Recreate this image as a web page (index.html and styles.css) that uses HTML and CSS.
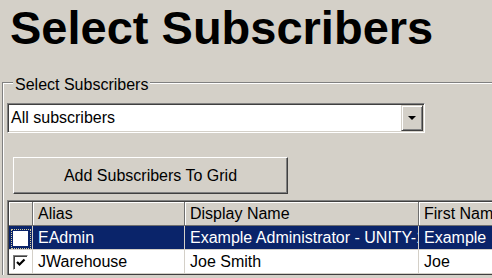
FILE: index.html
```html
<!DOCTYPE html>
<html lang="en">
<head>
    <meta charset="UTF-8">
    <title>Select Subscribers</title>
    <link rel="stylesheet" href="styles.css">
</head>
<body>
    <h1 class="title">Select Subscribers</h1>

    <fieldset class="group">
        <legend>Select Subscribers</legend>

        <div class="combo">
            <span class="combo-text">All subscribers</span>
            <span class="combo-btn"><i class="arrow"></i></span>
        </div>

        <button class="btn">Add Subscribers To Grid</button>

        <div class="grid-wrap">
            <table class="grid">
                <colgroup>
                    <col class="col-check">
                    <col class="col-alias">
                    <col class="col-display">
                    <col class="col-first">
                </colgroup>
                <thead>
                    <tr>
                        <th></th>
                        <th>Alias</th>
                        <th>Display Name</th>
                        <th>First Name</th>
                    </tr>
                </thead>
                <tbody>
                    <tr class="selected">
                        <td class="check-cell"><span class="focus"><span class="checkbox"></span></span></td>
                        <td>EAdmin</td>
                        <td>Example Administrator - UNITY-1</td>
                        <td>Example</td>
                    </tr>
                    <tr>
                        <td class="check-cell"><span class="checkbox sunken">
                            <svg width="11" height="11" viewBox="0 0 11 11"><path d="M2 5 L4.5 7.5 L9.5 2.5" fill="none" stroke="#000" stroke-width="2.2"/></svg>
                        </span></td>
                        <td>JWarehouse</td>
                        <td>Joe Smith</td>
                        <td>Joe</td>
                    </tr>
                </tbody>
            </table>
        </div>
    </fieldset>
</body>
</html>
```

FILE: styles.css
```css
:root {
    --face: #d4d0c8;
    --shadow: #808080;
    --dark: #404040;
    --select: #0a246a;
}

body {
    margin: 0;
    background: var(--face);
    font-family: 'Liberation Sans', Arial, sans-serif;
    color: #000;
    overflow: hidden;
}

.title {
    margin: 0;
    padding: 2px 0 0 10px;
    font-size: 47px;
    line-height: 52px;
    font-weight: bold;
    white-space: nowrap;
}

.group {
    margin: 17px 0 0 2px;
    padding: 0 0 0 4px;
    width: 600px;
    min-width: 0;
    border: none;
    border-top: 1px solid var(--shadow);
    border-left: 1px solid var(--shadow);
    box-shadow: inset 1px 1px 0 #fff;
}

.group legend {
    margin-left: 6px;
    padding: 5px 2px 0;
    font-size: 16px;
    line-height: 18px;
    background: var(--face);
}

.combo {
    display: flex;
    box-sizing: border-box;
    width: 418px;
    height: 30px;
    margin-top: 9px;
    padding: 1px;
    background: #fff;
    border: 1px solid;
    border-color: var(--shadow) #fff #fff var(--shadow);
    box-shadow: inset 1px 1px 0 var(--dark), inset -1px -1px 0 var(--face);
}

.combo-text {
    flex: 1;
    padding-left: 2px;
    font-size: 16px;
    line-height: 26px;
}

.combo-btn {
    display: flex;
    align-items: center;
    justify-content: center;
    box-sizing: border-box;
    width: 22px;
    height: 26px;
    background: var(--face);
    border: 1px solid;
    border-color: var(--face) var(--dark) var(--dark) var(--face);
    box-shadow: inset 1px 1px 0 #fff, inset -1px -1px 0 var(--shadow);
}

.arrow {
    width: 0;
    height: 0;
    border-left: 4px solid transparent;
    border-right: 4px solid transparent;
    border-top: 4px solid #000;
}

.btn {
    display: block;
    box-sizing: border-box;
    width: 275px;
    height: 37px;
    margin: 24px 0 0 6px;
    padding: 0;
    font-family: inherit;
    font-size: 16px;
    color: #000;
    background: var(--face);
    border: 1px solid;
    border-color: #fff var(--dark) var(--dark) #fff;
    box-shadow: inset -1px -1px 0 var(--shadow);
}

.grid-wrap {
    margin-top: 6px;
    border-top: 1px solid var(--shadow);
    border-left: 1px solid var(--shadow);
}

.grid {
    table-layout: fixed;
    width: 530px;
    border-collapse: separate;
    border-spacing: 0;
    border-top: 1px solid var(--dark);
    border-left: 1px solid var(--dark);
    border-bottom: 1px solid var(--dark);
    font-size: 16px;
}

.col-check { width: 24px; }
.col-alias { width: 152px; }
.col-display { width: 234px; }
.col-first { width: 120px; }

.grid th,
.grid td {
    padding: 0 0 0 5px;
    line-height: 23px;
    text-align: left;
    font-weight: normal;
    white-space: nowrap;
    overflow: hidden;
}

.grid th {
    background: var(--face);
    border-right: 1px solid #6e6e6e;
    border-bottom: 1px solid #6e6e6e;
    box-shadow: inset 1px 1px 0 #fff;
}

.grid td {
    background: #fff;
    border-right: 1px solid var(--face);
    border-bottom: 1px solid var(--face);
}

.grid .selected td {
    background: var(--select);
    color: #fff;
}

.grid .check-cell {
    padding: 0;
    text-align: center;
    vertical-align: middle;
}

.focus {
    display: inline-flex;
    align-items: center;
    justify-content: center;
    width: 20px;
    height: 20px;
    box-sizing: border-box;
    border: 1px dotted #d8d0a0;
    vertical-align: middle;
}

.checkbox {
    display: inline-flex;
    align-items: center;
    justify-content: center;
    box-sizing: border-box;
    width: 15px;
    height: 15px;
    background: #fff;
    vertical-align: middle;
}

.checkbox.sunken {
    border: 1px solid;
    border-color: var(--shadow) #fff #fff var(--shadow);
    box-shadow: inset 1px 1px 0 var(--dark);
}
```
